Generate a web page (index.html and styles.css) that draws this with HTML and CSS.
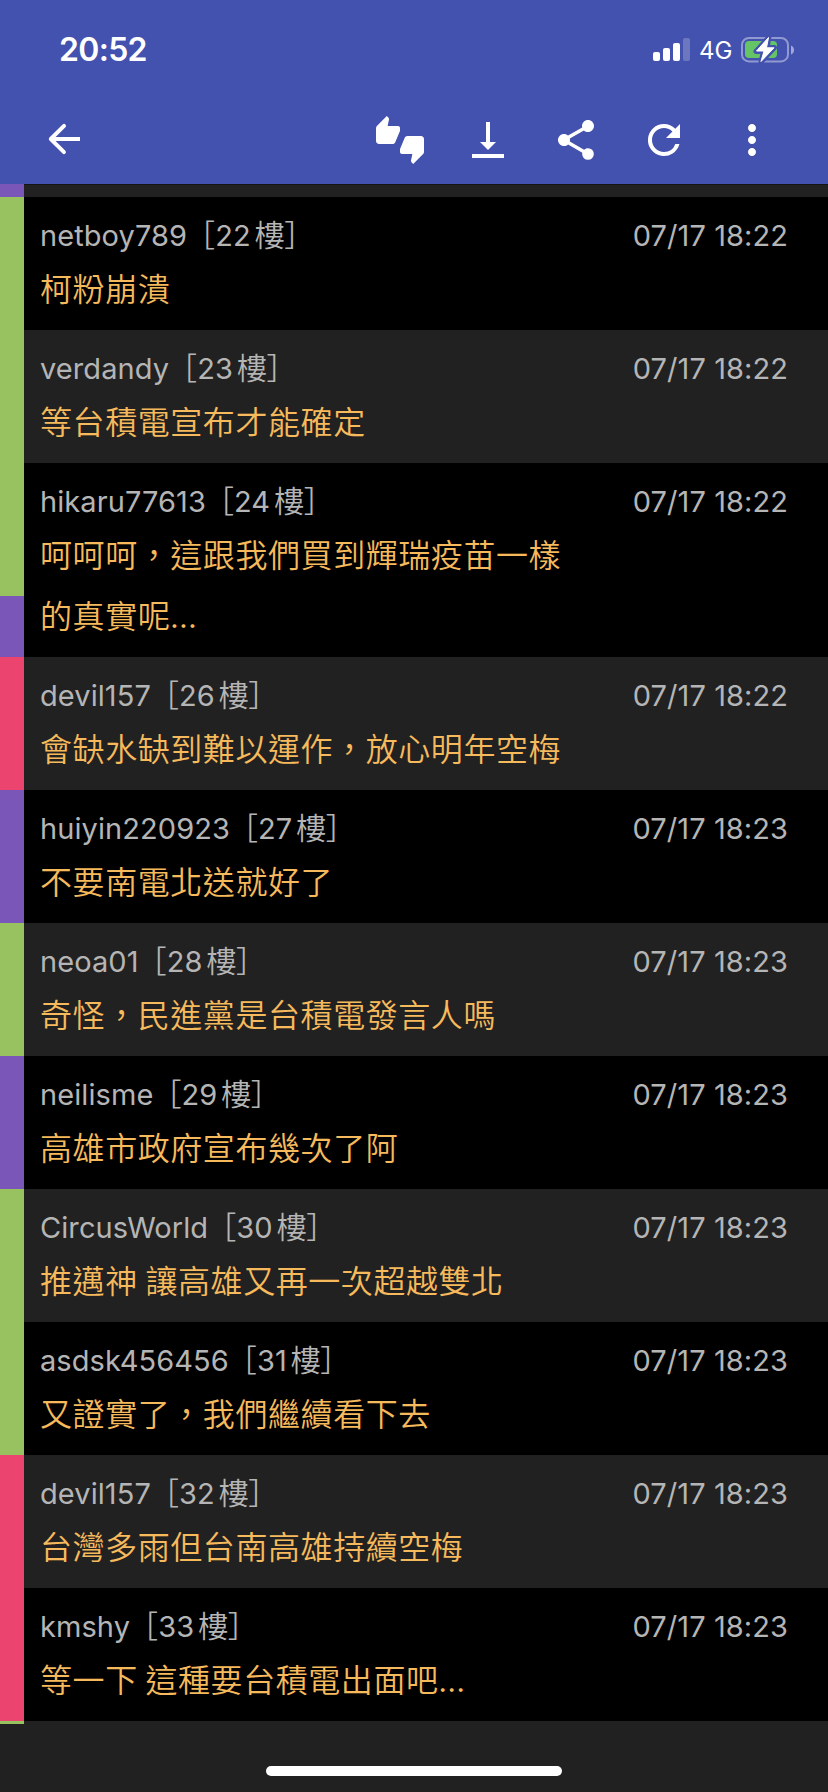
FILE: index.html
```
<!DOCTYPE html>
<html lang="zh-Hant">
<head>
<meta charset="utf-8">
<title>推文</title>
<link rel="stylesheet" href="styles.css">
</head>
<body>
<div class="screen">
  <header class="top">
    <div class="status">
      <span class="clock">20:52</span>
      <div class="indicators">
        <svg class="signal" width="38" height="24" viewBox="0 0 38 24" fill="#fff"><rect x="0" y="14" width="7" height="9" rx="2"/><rect x="10" y="10" width="7" height="13" rx="2"/><rect x="20" y="5" width="7" height="18" rx="2"/><rect x="30" y="0" width="7" height="23" rx="2" opacity=".22"/></svg>
        <span class="network">4G</span>
        <svg class="battery" width="54" height="28" viewBox="0 0 54 28"><rect x="1" y="2" width="46" height="23.400" rx="7" fill="none" stroke="#fff" stroke-opacity=".42" stroke-width="2"/><rect x="4" y="5" width="32" height="17" rx="4" fill="#65c466"/><path d="M50 9.500c4 1.500 4 7.500 0 9z" fill="#fff" opacity=".5"/><path d="M28 1 15 15.500h7.500L20 26 33.500 11.500H26z" fill="#fff" stroke="#4351af" stroke-width="5" stroke-linejoin="round"/><path d="M27.500 1.500 15.500 15h7.500L20 25.500 33 11.800H25.500z" fill="#fff" stroke="#fff" stroke-width="1" stroke-linejoin="round"/></svg>
      </div>
    </div>
    <nav class="toolbar">
      <svg class="icon back" viewBox="0 0 24 24"><path d="M20 11H7.830l4.880-4.880c.39-.39.39-1.030 0-1.420a1 1 0 0 0-1.410 0l-6.590 6.590a1 1 0 0 0 0 1.410l6.590 6.590a1 1 0 0 0 1.410-1.410L7.830 13H20z"/></svg>
      <svg class="icon" viewBox="0 0 24 24"><path d="M12 6c0-.55-.45-1-1-1H5.820l.66-3.180.02-.23c0-.31-.13-.59-.33-.8L5.380 0 .44 4.940C.17 5.210 0 5.590 0 6v6.500c0 .83.67 1.500 1.500 1.500h6.750c.62 0 1.150-.38 1.380-.91l2.260-5.290c.07-.17.11-.36.11-.55V6zm10.500 4h-6.750c-.62 0-1.150.38-1.380.91l-2.260 5.290c-.07.17-.11.36-.11.55V18c0 .55.45 1 1 1h5.180l-.66 3.180-.02.24c0 .31.13.59.33.8l.79.78 4.940-4.940c.27-.27.44-.65.44-1.060v-6.500c0-.83-.67-1.500-1.500-1.500z"/></svg>
      <svg class="icon" viewBox="0 0 24 24"><path d="M16 13h-3V3h-2v10H8l4 4 4-4zM4 19v2h16v-2H4z"/></svg>
      <svg class="icon" viewBox="0 0 24 24"><path d="M18 16.080c-.76 0-1.440.3-1.960.77L8.910 12.700c.05-.23.09-.46.09-.7s-.04-.47-.09-.7l7.050-4.110c.54.5 1.250.81 2.040.81 1.660 0 3-1.340 3-3s-1.340-3-3-3-3 1.340-3 3c0 .24.04.47.09.7L8.040 9.810C7.500 9.310 6.790 9 6 9c-1.660 0-3 1.340-3 3s1.340 3 3 3c.79 0 1.500-.31 2.040-.81l7.120 4.160c-.05.21-.08.43-.08.65a2.920 2.920 0 1 0 2.920-2.920z"/></svg>
      <svg class="icon" viewBox="0 0 24 24"><path d="M17.650 6.350A7.958 7.958 0 0 0 12 4a8 8 0 1 0 7.730 10h-2.080A5.990 5.990 0 0 1 12 18c-3.310 0-6-2.690-6-6s2.690-6 6-6c1.660 0 3.140.69 4.220 1.780L13 11h7V4l-2.350 2.350z"/></svg>
      <svg class="icon" viewBox="0 0 24 24"><path d="M12 8c1.100 0 2-.9 2-2s-.9-2-2-2-2 .9-2 2 .9 2 2 2zm0 2c-1.100 0-2 .9-2 2s.9 2 2 2 2-.9 2-2-.9-2-2-2zm0 6c-1.100 0-2 .9-2 2s.9 2 2 2 2-.9 2-2-.9-2-2-2z"/></svg>
    </nav>
  </header>
  <main class="thread">
    <div class="votes">
      <i class="purple" style="height:13px"></i><i class="green" style="height:399px"></i><i class="purple" style="height:61px"></i><i class="pink" style="height:133px"></i><i class="purple" style="height:133px"></i><i class="green" style="height:133px"></i><i class="purple" style="height:133px"></i><i class="green" style="height:266px"></i><i class="pink" style="height:266px"></i><i class="green" style="height:3px"></i>
    </div>
    <div class="comments">
      <article><div class="meta"><span>netboy789<b>［</b>22<b class="floor">樓］</b></span><time>07/17 18:22</time></div><p>柯粉崩潰</p></article>
      <article><div class="meta"><span>verdandy<b>［</b>23<b class="floor">樓］</b></span><time>07/17 18:22</time></div><p>等台積電宣布才能確定</p></article>
      <article><div class="meta"><span>hikaru77613<b>［</b>24<b class="floor">樓］</b></span><time>07/17 18:22</time></div><p>呵呵呵，這跟我們買到輝瑞疫苗一樣</p><p>的真實呢<em>...</em></p></article>
      <article><div class="meta"><span>devil157<b>［</b>26<b class="floor">樓］</b></span><time>07/17 18:22</time></div><p>會缺水缺到難以運作，放心明年空梅</p></article>
      <article><div class="meta"><span>huiyin220923<b>［</b>27<b class="floor">樓］</b></span><time>07/17 18:23</time></div><p>不要南電北送就好了</p></article>
      <article><div class="meta"><span>neoa01<b>［</b>28<b class="floor">樓］</b></span><time>07/17 18:23</time></div><p>奇怪，民進黨是台積電發言人嗎</p></article>
      <article><div class="meta"><span>neilisme<b>［</b>29<b class="floor">樓］</b></span><time>07/17 18:23</time></div><p>高雄市政府宣布幾次了阿</p></article>
      <article><div class="meta"><span>CircusWorld<b>［</b>30<b class="floor">樓］</b></span><time>07/17 18:23</time></div><p>推邁神 讓高雄又再一次超越雙北</p></article>
      <article><div class="meta"><span>asdsk456456<b>［</b>31<b class="floor">樓］</b></span><time>07/17 18:23</time></div><p>又證實了，我們繼續看下去</p></article>
      <article><div class="meta"><span>devil157<b>［</b>32<b class="floor">樓］</b></span><time>07/17 18:23</time></div><p>台灣多雨但台南高雄持續空梅</p></article>
      <article><div class="meta"><span>kmshy<b>［</b>33<b class="floor">樓］</b></span><time>07/17 18:23</time></div><p>等一下 這種要台積電出面吧<em>...</em></p></article>
    </div>
  </main>
  <footer class="home"><span></span></footer>
</div>
</body>
</html>
```

FILE: styles.css
```
* { box-sizing: border-box; }
body { margin: 0; background: #212121; }
.screen {
  width: 828px;
  height: 1792px;
  display: flex;
  flex-direction: column;
  overflow: hidden;
  background: #212121;
  font-family: Inter, "Noto Sans CJK TC", sans-serif;
}
.top { height: 184px; background: #4351af; color: #fff; }
.status {
  height: 100px;
  padding: 0 33px 0 59px;
  display: flex;
  justify-content: space-between;
  align-items: center;
}
.clock { font-size: 32px; font-weight: 600; line-height: 40px; letter-spacing: -0.7px; }
.indicators { display: flex; align-items: center; }
.network { margin: 2px 9px 0 8px; width: 33px; font-size: 24px; line-height: 30px; font-weight: 400; letter-spacing: 0; }
.signal, .battery { display: block; }
.toolbar {
  height: 84px;
  padding: 0 52px 4px 40px;
  display: flex;
  align-items: center;
  gap: 40px;
}
.icon { display: block; width: 48px; height: 48px; fill: #fff; }
.back { margin: -2px auto 0 0; }
.thread { display: flex; height: 1540px; flex: none; }
.votes { width: 24px; display: flex; flex-direction: column; }
.votes i { display: block; }
.purple { background: #7956b8; }
.green { background: #98c15f; }
.pink { background: #eb446f; }
.comments { flex: 1; padding-top: 13px; box-shadow: inset 0 1px #141414; }
article { padding: 16px 40px 12px 16px; background: #212121; }
article:nth-child(odd) { background: #000; }
.meta {
  height: 44px;
  display: flex;
  justify-content: space-between;
  font-size: 29px;
  font-weight: 400;
  line-height: 45px;
  color: #b5b5b5;
  letter-spacing: 0.08px;
  white-space: nowrap;
}
.meta b { font-family: "Noto Sans CJK TC", sans-serif; font-size: 30px; font-weight: 350; line-height: 1; margin-left: -2px; }
.meta .floor { margin-left: 4px; letter-spacing: -0.5px; }
p {
  height: 61px;
  margin: 0;
  font-family: "Noto Sans CJK TC", sans-serif;
  font-size: 32px;
  font-weight: 350;
  line-height: 60px;
  letter-spacing: 0.57px;
  color: #f6ba5c;
  white-space: nowrap;
}
p em { font-family: Inter, sans-serif; font-style: normal; font-size: 29px; font-weight: 400; line-height: 1; }
.home { flex: 1; padding-top: 42px; display: flex; justify-content: center; }
.home span { width: 296px; height: 10px; border-radius: 5px; background: #fff; }
```
